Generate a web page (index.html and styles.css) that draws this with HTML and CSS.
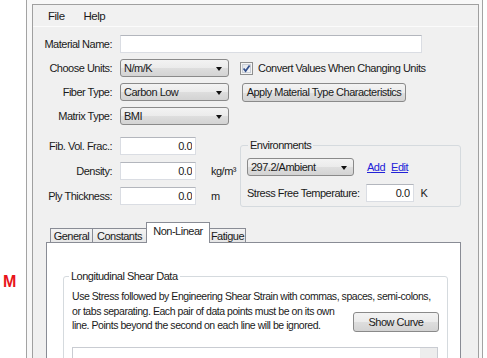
FILE: index.html
```html
<!DOCTYPE html>
<html lang="en">

<head>
    <title>Material Editor</title>
    <meta name="viewport" content="initial-scale=1, width=device-width">
    <link rel="stylesheet" href="styles.css">
</head>

<body>
    <div class="page">
        <div class="gutter"><span class="marker">M</span></div>

        <div class="frame">
            <div class="window">
                <div class="menubar">
                    <span>File</span>
                    <span>Help</span>
                </div>

                <div class="form">
                    <div class="row">
                        <label class="lbl" for="name">Material Name:</label>
                        <input type="text" id="name" class="text name">
                    </div>
                    <div class="row">
                        <span class="lbl">Choose Units:</span>
                        <div class="combo"><span>N/m/K</span><i class="arrow"></i></div>
                        <label class="check">
                            <svg width="13" height="13" viewBox="0 0 13 13">
                                <defs>
                                    <linearGradient id="cb" x1="0" y1="0" x2="1" y2="1">
                                        <stop offset="0" stop-color="#dfe3e8" />
                                        <stop offset="1" stop-color="#f7f8fa" />
                                    </linearGradient>
                                </defs>
                                <rect x="0.5" y="0.5" width="12" height="12" fill="#f4f4f4" stroke="#8e8f8f" />
                                <rect x="2.5" y="2.5" width="8" height="8" fill="url(#cb)" stroke="#c9ced6" />
                                <path d="M3.6 6.4 L5.6 9 L9.6 3.4" fill="none" stroke="#324f8c" stroke-width="1.7" />
                            </svg>
                            Convert Values When Changing Units
                        </label>
                    </div>
                    <div class="row">
                        <span class="lbl">Fiber Type:</span>
                        <div class="combo"><span>Carbon Low</span><i class="arrow"></i></div>
                        <button class="btn apply">Apply Material Type Characteristics</button>
                    </div>
                    <div class="row">
                        <span class="lbl">Matrix Type:</span>
                        <div class="combo"><span>BMI</span><i class="arrow"></i></div>
                    </div>
                </div>

                <div class="props">
                    <div class="numbers">
                        <div class="row">
                            <span class="lbl">Fib. Vol. Frac.:</span>
                            <input type="text" class="text num" value="0.0">
                        </div>
                        <div class="row">
                            <span class="lbl">Density:</span>
                            <input type="text" class="text num" value="0.0">
                            <span class="unit">kg/m³</span>
                        </div>
                        <div class="row">
                            <span class="lbl">Ply Thickness:</span>
                            <input type="text" class="text num" value="0.0">
                            <span class="unit">m</span>
                        </div>
                    </div>

                    <fieldset class="group env">
                        <legend>Environments</legend>
                        <div class="env-row">
                            <div class="combo env-combo"><span>297.2/Ambient</span><i class="arrow"></i></div>
                            <a href="#" class="link add">Add</a>
                            <a href="#" class="link">Edit</a>
                        </div>
                        <div class="env-row temp">
                            <span>Stress Free Temperature:</span>
                            <input type="text" class="text temp-input" value="0.0">
                            <span class="kelvin">K</span>
                        </div>
                    </fieldset>
                </div>

                <div class="tabs">
                    <div class="tabstrip">
                        <span class="tab general">General</span>
                        <span class="tab constants">Constants</span>
                        <span class="tab nonlinear active">Non-Linear</span>
                        <span class="tab fatigue">Fatigue</span>
                    </div>
                    <div class="tabpanel">
                        <fieldset class="group shear">
                            <legend>Longitudinal Shear Data</legend>
                            <div class="note">Use Stress followed by Engineering Shear Strain with commas, spaces, semi-colons,</div>
                            <div class="note-row">
                                <div class="note">or tabs separating. Each pair of data points must be on its own<br>line. Points beyond the second on each line will be ignored.</div>
                                <button class="btn curve">Show Curve</button>
                            </div>
                            <div class="data">
                                <div class="data-body"></div>
                                <div class="scroll"><span class="scroll-btn"></span></div>
                            </div>
                        </fieldset>
                    </div>
                </div>
            </div>
        </div>
    </div>
</body>

</html>
```
FILE: styles.css
```css
* {
    box-sizing: border-box;
}

html,
body {
    margin: 0;
    padding: 0;
    background-color: #fff;
    overflow: hidden;
}

body {
    font-family: "Liberation Sans", Arial, sans-serif;
    font-size: 11px;
    letter-spacing: -0.5px;
    color: #1a1a1a;
}

input,
button {
    font: inherit;
    letter-spacing: inherit;
    color: inherit;
    margin: 0;
}

.page {
    display: flex;
    height: 358px;
}

.gutter {
    width: 26px;
    flex: none;
    padding: 273px 0 0 3px;
}

.marker {
    color: #e8141b;
    font-weight: bold;
    font-size: 16px;
    letter-spacing: 0;
}

.frame {
    width: 457px;
    height: 358px;
    flex: none;
    padding: 0 3px 0 5px;
    border-left: 1px solid #a3a3a3;
    border-right: 1px solid #a3a3a3;
    background-color: #f8f8f8;
    overflow: hidden;
}

.window {
    width: 447px;
    height: 400px;
    margin-top: 4px;
    border: 1px solid #a0a0a0;
    border-bottom: none;
    background-color: #f0f0f0;
}

/* menu */

.menubar {
    display: flex;
    gap: 19px;
    height: 22px;
    padding: 0 0 0 15px;
    align-items: center;
    border-bottom: 1px solid #fbfbfb;
    background-color: #f1f1f1;
    font-size: 11.5px;
}

/* top form */

.form {
    padding-top: 5px;
}

.row {
    display: flex;
    align-items: center;
    height: 24px;
}

.lbl {
    width: 79px;
    margin-right: 8px;
    text-align: right;
    flex: none;
}

.text {
    height: 18px;
    padding: 0 3px;
    border: 1px solid #dadde3;
    border-top-color: #b3b6bd;
    background-color: #fff;
    outline: none;
}

.name {
    width: 302px;
}

.combo {
    display: flex;
    align-items: center;
    justify-content: space-between;
    width: 109px;
    height: 18px;
    padding: 0 6px 0 3px;
    border: 1px solid #8a8a8a;
    border-radius: 3px;
    background: linear-gradient(#f3f3f3 0%, #ebebeb 50%, #dedede 51%, #d3d3d3 100%);
    flex: none;
}

.arrow {
    width: 0;
    height: 0;
    margin-top: 1px;
    border-left: 3.5px solid transparent;
    border-right: 3.5px solid transparent;
    border-top: 4px solid #111;
}

.check {
    display: flex;
    align-items: center;
    gap: 5px;
    margin-left: 11px;
}

.check svg {
    display: block;
}

.btn {
    height: 19px;
    padding: 0;
    border: 1px solid #8a8a8a;
    border-radius: 3px;
    background: linear-gradient(#f3f3f3 0%, #ebebeb 50%, #dedede 51%, #d3d3d3 100%);
    white-space: nowrap;
}

.apply {
    width: 164px;
    margin-left: 13px;
}

/* numbers + environments */

.props {
    display: flex;
    align-items: flex-start;
    padding-top: 5px;
}

.numbers {
    width: 207px;
    flex: none;
}

.numbers .row {
    height: 25px;
}

.num {
    width: 76px;
    text-align: right;
    padding-right: 3px;
}

.unit {
    margin-left: 15px;
}

.group {
    min-width: 0;
    margin: 0;
    border: 1px solid #d5dade;
    border-radius: 3px;
}

.group legend {
    padding: 0 2px;
    line-height: 13px;
}

.env {
    width: 221px;
    margin-top: 6px;
    padding: 6px 6px 4px 6px;
}

.env legend {
    margin-left: 1px;
}

.env-row {
    display: flex;
    align-items: center;
    height: 18px;
}

.env-combo {
    width: 107px;
}

.link {
    color: #2222d8;
    text-decoration: underline;
}

.add {
    margin: 0 6px 0 13px;
}

.temp {
    margin-top: 8px;
}

.temp-input {
    width: 48px;
    margin-left: 6px;
    text-align: right;
    padding-right: 3px;
}

.kelvin {
    margin-left: 7px;
}

/* tabs */

.tabs {
    width: 415px;
    margin: 14px 0 0 13px;
}

.tabstrip {
    display: flex;
    align-items: flex-end;
    height: 20px;
    padding-left: 4px;
}

.tab {
    height: 14px;
    margin-left: -1px;
    border: 1px solid #898c95;
    border-bottom: none;
    background: linear-gradient(#f3f3f3, #e6e6e6);
    text-align: center;
    line-height: 14px;
}

.general {
    width: 43px;
    margin-left: 0;
}

.constants {
    width: 55px;
}

.nonlinear {
    width: 64px;
}

.fatigue {
    width: 37px;
}

.tab.active {
    position: relative;
    height: 21px;
    margin-bottom: -1px;
    background: #fff;
    line-height: 16px;
}

.tabpanel {
    height: 200px;
    padding: 27px 12px 0 16px;
    border: 1px solid #898c95;
    background-color: #fff;
}

.shear {
    padding: 6px 8px 0 8px;
}

.shear legend {
    margin-left: -3px;
}

.note {
    font-size: 10.5px;
    letter-spacing: -0.45px;
    line-height: 14.5px;
    white-space: nowrap;
}

.note-row {
    display: flex;
    align-items: flex-start;
}

.curve {
    width: 86px;
    height: 20px;
    margin: 8px 0 0 auto;
}

.data {
    display: flex;
    height: 40px;
    margin-top: 14px;
    margin-right: 1px;
    border: 1px solid #c9ccd2;
}

.data-body {
    flex: 1;
}

.scroll {
    width: 17px;
    background-color: #f3f3f3;
    border-left: 1px solid #ececec;
}

.scroll-btn {
    display: block;
    height: 14px;
    border-bottom: 1px solid #e2e2e2;
    background-color: #ededed;
}
```
